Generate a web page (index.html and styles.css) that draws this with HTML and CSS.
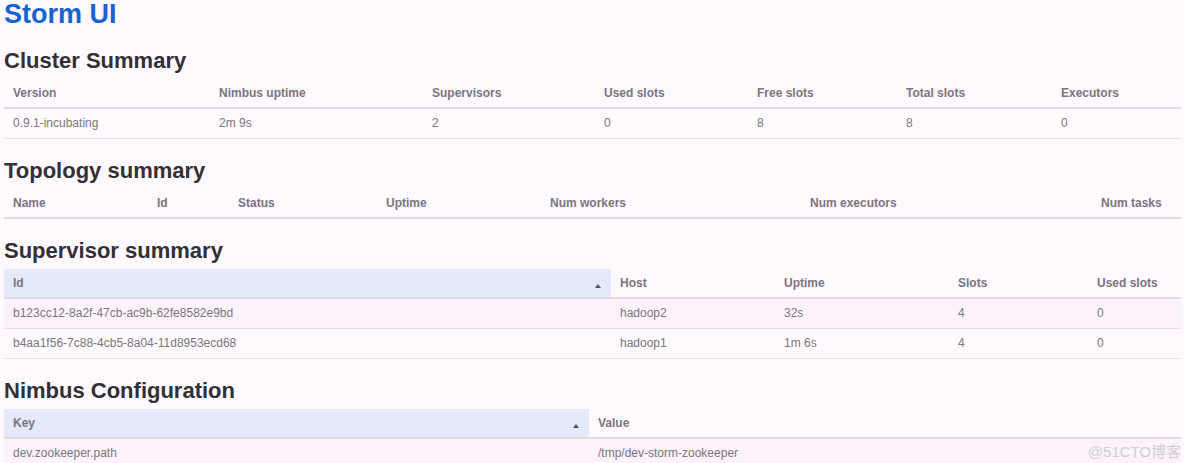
FILE: index.html
```html
<!DOCTYPE html>
<html>
<head>
<meta charset="utf-8">
<title>Storm UI</title>
<link rel="stylesheet" href="styles.css">
</head>
<body>
<h1 class="title">Storm UI</h1>

<h2 class="section">Cluster Summary</h2>
<table class="grid">
  <colgroup>
    <col class="c-206"><col class="c-213"><col class="c-172"><col class="c-153"><col class="c-149"><col class="c-155"><col>
  </colgroup>
  <thead>
    <tr><th>Version</th><th>Nimbus uptime</th><th>Supervisors</th><th>Used slots</th><th>Free slots</th><th>Total slots</th><th>Executors</th></tr>
  </thead>
  <tbody>
    <tr><td>0.9.1-incubating</td><td>2m 9s</td><td>2</td><td>0</td><td>8</td><td>8</td><td>0</td></tr>
  </tbody>
</table>

<h2 class="section">Topology summary</h2>
<table class="grid">
  <colgroup>
    <col class="c-144"><col class="c-81"><col class="c-148"><col class="c-164"><col class="c-260"><col class="c-291"><col>
  </colgroup>
  <thead>
    <tr><th>Name</th><th>Id</th><th>Status</th><th>Uptime</th><th>Num workers</th><th>Num executors</th><th>Num tasks</th></tr>
  </thead>
</table>

<h2 class="section">Supervisor summary</h2>
<table class="grid striped">
  <colgroup>
    <col class="c-607"><col class="c-164"><col class="c-174"><col class="c-139"><col>
  </colgroup>
  <thead>
    <tr><th class="sorted">Id</th><th>Host</th><th>Uptime</th><th>Slots</th><th>Used slots</th></tr>
  </thead>
  <tbody>
    <tr><td>b123cc12-8a2f-47cb-ac9b-62fe8582e9bd</td><td>hadoop2</td><td>32s</td><td>4</td><td>0</td></tr>
    <tr><td>b4aa1f56-7c88-4cb5-8a04-11d8953ecd68</td><td>hadoop1</td><td>1m 6s</td><td>4</td><td>0</td></tr>
  </tbody>
</table>

<h2 class="section">Nimbus Configuration</h2>
<table class="grid striped">
  <colgroup>
    <col class="c-585"><col>
  </colgroup>
  <thead>
    <tr><th class="sorted">Key</th><th>Value</th></tr>
  </thead>
  <tbody>
    <tr><td>dev.zookeeper.path</td><td>/tmp/dev-storm-zookeeper</td></tr>
  </tbody>
</table>

<div class="watermark">@51CTO博客</div>
</body>
</html>
```
FILE: styles.css
```css
html, body {
  margin: 0;
  padding: 0;
  background: #fdf9fd;
}
body {
  padding: 0 3px 0 4px;
  font-family: "Liberation Sans", Arial, sans-serif;
  overflow: hidden;
  height: 463px;
  position: relative;
  box-sizing: border-box;
}
.title {
  margin: 0;
  font-size: 27px;
  line-height: 29px;
  font-weight: bold;
  color: #1862d2;
}
.section {
  margin: 20px 0 6px;
  font-size: 22px;
  line-height: 24px;
  font-weight: bold;
  color: #332f34;
}
.grid {
  width: 100%;
  border-collapse: collapse;
  table-layout: fixed;
  font-size: 12px;
  line-height: 13px;
}
.grid th {
  text-align: left;
  font-weight: bold;
  color: #7c7481;
  padding: 8px 9px 7px;
  border-bottom: 2px solid #e2d9e4;
  white-space: nowrap;
}
.grid td {
  color: #7a777b;
  padding: 8px 9px;
  border-bottom: 1px solid #e8e0e8;
  white-space: nowrap;
}
.striped tbody tr:nth-child(odd) td {
  background: #fbf3f9;
}
.grid th.sorted {
  background: #e4e9fc;
  position: relative;
}
.grid th.sorted::after {
  content: "";
  position: absolute;
  right: 10px;
  top: 15px;
  border-left: 3px solid transparent;
  border-right: 3px solid transparent;
  border-bottom: 4px solid #555;
}
.c-206 { width: 206px; }
.c-213 { width: 213px; }
.c-172 { width: 172px; }
.c-153 { width: 153px; }
.c-149 { width: 149px; }
.c-155 { width: 155px; }
.c-144 { width: 144px; }
.c-81 { width: 81px; }
.c-148 { width: 148px; }
.c-164 { width: 164px; }
.c-260 { width: 260px; }
.c-291 { width: 291px; }
.c-607 { width: 607px; }
.c-174 { width: 174px; }
.c-139 { width: 139px; }
.c-585 { width: 585px; }
.watermark {
  position: absolute;
  right: 3px;
  bottom: 3px;
  font-family: "Liberation Sans", "Noto Sans CJK SC", sans-serif;
  font-size: 15px;
  line-height: 17px;
  color: #d2cfd3;
}
```
